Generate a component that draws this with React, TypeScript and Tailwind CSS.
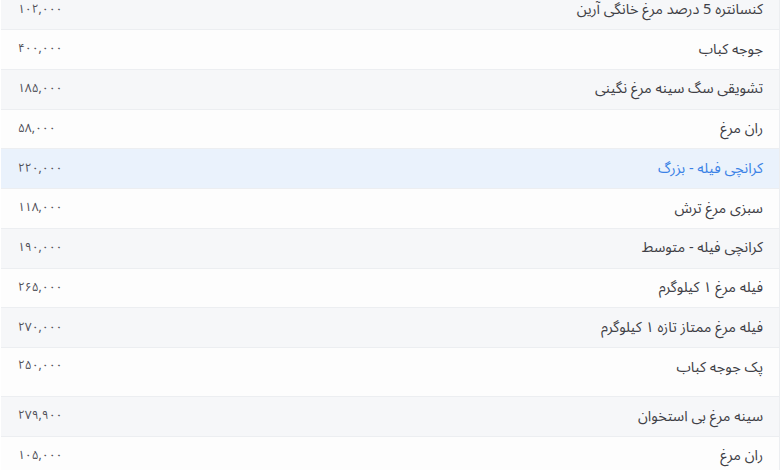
const rows = [
  { name: 'کنسانتره 5 درصد مرغ خانگی آرین', price: '۱۰۲,۰۰۰' },
  { name: 'جوجه کباب', price: '۴۰۰,۰۰۰' },
  { name: 'تشویقی سگ سینه مرغ نگینی', price: '۱۸۵,۰۰۰' },
  { name: 'ران مرغ', price: '۵۸,۰۰۰' },
  { name: 'کرانچی فیله - بزرگ', price: '۲۲۰,۰۰۰', active: true },
  { name: 'سبزی مرغ ترش', price: '۱۱۸,۰۰۰' },
  { name: 'کرانچی فیله - متوسط', price: '۱۹۰,۰۰۰' },
  { name: 'فیله مرغ ۱ کیلوگرم', price: '۲۶۵,۰۰۰' },
  { name: 'فیله مرغ ممتاز تازه ۱ کیلوگرم', price: '۲۷۰,۰۰۰' },
  { name: 'پک جوجه کباب', price: '۲۵۰,۰۰۰', tall: true },
  { name: 'سینه مرغ بی استخوان', price: '۲۷۹,۹۰۰' },
  { name: 'ران مرغ', price: '۱۰۵,۰۰۰' },
];

export default function App() {
  return (
    <div
      dir="rtl"
      className="w-[780px] h-[470px] overflow-hidden bg-white"
      style={{ fontFamily: '"Noto Sans Arabic", "DejaVu Sans", sans-serif' }}
    >
      <div className="-mt-[9.75px] w-[779px] border-r border-[#eceef1]">
        {rows.map((r, i) => (
          <div
            key={i}
            className={
              'flex justify-between pr-4 pl-[17px] border-b border-[#eceef1] text-[14.5px] ' +
              (r.tall ? 'h-[49px] pt-[9px] items-start ' : 'h-[39.75px] items-center ') +
              (r.active ? 'bg-[#eaf2fc]' : i % 2 === 0 ? 'bg-[#f6f7f9]' : 'bg-[#fdfdfd]')
            }
          >
            <span className={r.active ? 'text-[#3b82e6]' : 'text-[#3f3f46]'}>{r.name}</span>
            <span className="text-[#505058] text-[12px]">{r.price}</span>
          </div>
        ))}
      </div>
    </div>
  );
}
